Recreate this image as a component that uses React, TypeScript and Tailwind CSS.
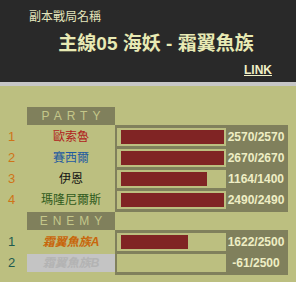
const party = [
  { name: "歐索魯", color: "text-[#b01c1c]", hp: 2570, max: 2570 },
  { name: "賽西爾", color: "text-[#1f5aa0]", hp: 2670, max: 2670 },
  { name: "伊恩", color: "text-[#141414]", hp: 1164, max: 1400 },
  { name: "瑪隆尼爾斯", color: "text-[#2f5a1c]", hp: 2490, max: 2490 },
]

const enemies = [
  { name: "霜翼魚族A", color: "text-[#c8660c]", hp: 1622, max: 2500, dead: false },
  { name: "霜翼魚族B", color: "text-[#b3b3b3]", hp: -61, max: 2500, dead: true },
]

type Row = { name: string; color: string; hp: number; max: number; dead?: boolean }

function Section({ label, rows, numColor, italic }: { label: string; rows: Row[]; numColor: string; italic?: boolean }) {
  return (
    <div>
      <div className="ml-[27px] w-[88px] h-[18px] bg-[#80805c] text-[#c4c78a] text-[12px] tracking-[5px] flex items-center justify-center pl-[5px]">
        {label}
      </div>
      <div className="flex">
        <div className="flex flex-col gap-[3px] pt-[3px]">
          {rows.map((r, i) => (
            <div key={i} className="flex h-[18px] items-center">
              <div className={`w-[27px] pl-[8px] text-[13px] ${numColor}`}>{i + 1}</div>
              <div
                className={`w-[88px] h-full flex items-center justify-center text-[12px] ${r.color} ${
                  italic ? "italic font-bold" : ""
                } ${r.dead ? "bg-[#c4c4c4]" : ""}`}
              >
                {r.name}
              </div>
            </div>
          ))}
        </div>
        <div className="w-[173px] bg-[#80805c] flex flex-col gap-[3px] py-[3px] pl-[2px]">
          {rows.map((r, i) => (
            <div key={i} className="flex h-[18px] items-center">
              <div className="w-[109px] h-full bg-[#bcbf80] pl-[4px] pr-[2px] py-[2px]">
                <div
                  className="h-full bg-[#802424]"
                  style={{ width: `${Math.max(0, r.hp / r.max) * 100}%` }}
                />
              </div>
              <div className="flex-1 text-center pr-[2px] text-[12px] font-bold text-[#eeeec4]">
                {r.hp}/{r.max}
              </div>
            </div>
          ))}
        </div>
      </div>
    </div>
  )
}

export default function App() {
  return (
    <div
      className="w-[296px] h-[282px] bg-[#bcbf80] overflow-hidden"
      style={{ fontFamily: '"Liberation Sans", "Noto Sans CJK TC", sans-serif' }}
    >
      <div className="h-[82px] bg-[#292929] relative">
        <div className="pt-[8px] pl-[29px] text-[12px] text-[#e4e6bc]">副本戰局名稱</div>
        <div className="mt-[6px] text-center pl-[16px] text-[19px] font-bold text-[#e8eab4] leading-[23px]">
          主線05 海妖 - 霜翼魚族
        </div>
        <div className="flex justify-end pr-[24px] mt-[8px]">
          <a href="#" className="text-[12px] font-bold underline text-[#f0f0c8] leading-[14px]">
            LINK
          </a>
        </div>
      </div>
      <div className="h-[4px] bg-[#c6c6c6]" />
      <div className="pt-[21px]">
        <Section label="PARTY" rows={party} numColor="text-[#cf7418]" />
        <Section label="ENEMY" rows={enemies} numColor="text-[#1e5a50]" italic />
      </div>
    </div>
  )
}
